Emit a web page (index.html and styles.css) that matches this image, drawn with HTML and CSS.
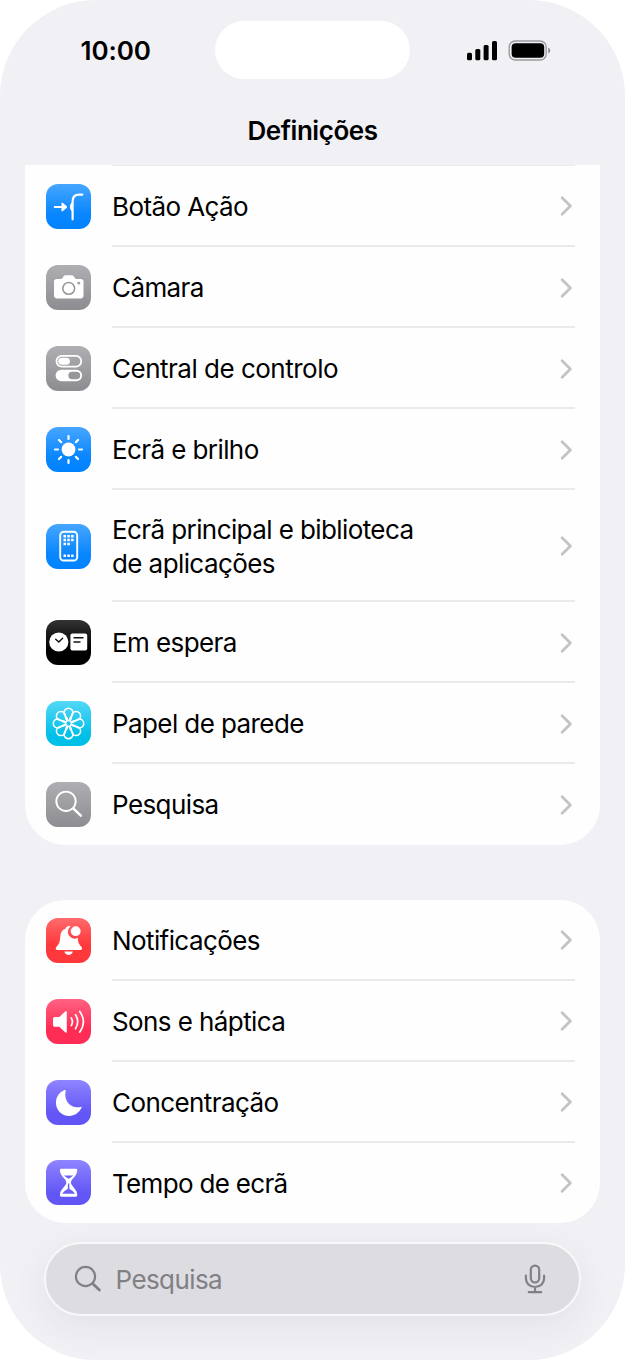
FILE: index.html
```
<!DOCTYPE html>
<html lang="pt">
<head>
<meta charset="utf-8">
<title>Definições</title>
<link rel="stylesheet" href="styles.css">
</head>
<body>
<svg class="defs" width="0" height="0" aria-hidden="true">
  <symbol id="chevron" viewBox="0 0 14 22"><path d="M2.100 2.800 10.400 11 2.100 19.200" fill="none" stroke="#c4c4c6" stroke-width="2.800" stroke-linecap="round" stroke-linejoin="round"/></symbol>
</svg>
<main class="phone">
  <header class="status">
    <time class="clock">10:00</time>
    <div class="island"></div>
    <svg class="indicators" viewBox="0 0 86 24">
      <rect x="1" y="14.7" width="5" height="7.6" rx="1.5"/><rect x="9.3" y="11" width="5" height="11.3" rx="1.5"/><rect x="17.6" y="7" width="5" height="15.3" rx="1.5"/><rect x="26" y="3" width="5" height="19.3" rx="1.5"/>
      <rect x="43.2" y="3" width="37" height="19" rx="6" fill="none" stroke="#9b9a9e" stroke-width="1.4"/>
      <rect x="45.6" y="5.3" width="32.6" height="14.4" rx="4"/>
      <path d="M82.300 9.500q1.900 1 1.900 3t-1.900 3z" fill="#858488"/>
    </svg>
  </header>
  <h1 class="title">Definições</h1>
  <section class="card card-first">
    <a class="row"><span class="icon blue"><svg viewBox="0 0 45 45"><g fill="none" stroke="#fff" stroke-width="2.2" stroke-linecap="round"><path d="M8.8 23H17M26.6 35.3V17.5Q26.6 10.6 33 10.6H36.3"/></g><path d="M15.5 19.2q0-1.3 1.1-.5l4.2 3.5q.8.8 0 1.6l-4.2 3.5q-1.1.8-1.1-.5zM26.8 18.3v9.2c-3.7-.6-3.7-8.6 0-9.2z" fill="#fff"/></svg></span><span class="label nudge">Botão Ação</span><svg class="chev"><use href="#chevron"/></svg></a>
    <a class="row"><span class="icon gray"><svg viewBox="0 0 45 45"><path d="M10.8 14H15q1 0 1.6-1l.9-1.5q.7-1.2 2.2-1.2h6q1.5 0 2.2 1.2l.9 1.5q.6 1 1.6 1h4.3q2.8 0 2.8 2.8v13.8q0 2.8-2.8 2.8H10.8Q8 33.400 8 30.600V16.800Q8 14 10.800 14z" fill="#fff"/><g fill="none" stroke="#98979c" stroke-width="1.6"><circle cx="22.7" cy="23.400" r="5.900"/></g><circle cx="32.800" cy="18.200" r="1.400" fill="#a09fa4"/></svg></span><span class="label">Câmara</span><svg class="chev"><use href="#chevron"/></svg></a>
    <a class="row"><span class="icon gray"><svg viewBox="0 0 45 45"><rect x="10.500" y="9.900" width="24.700" height="10.700" rx="5.350" fill="none" stroke="#fff" stroke-width="1.800"/><rect x="12.300" y="11.700" width="11.600" height="7.100" rx="3.550" fill="#fff"/><rect x="9.600" y="23.700" width="26.500" height="11.500" rx="5.750" fill="#fff"/><rect x="22.400" y="25.700" width="11.800" height="7.500" rx="3.750" fill="#96959a"/></svg></span><span class="label wide">Central de controlo</span><svg class="chev"><use href="#chevron"/></svg></a>
    <a class="row"><span class="icon blue"><svg viewBox="0 0 45 45"><circle cx="22.500" cy="22.500" r="6.900" fill="#fff"/><g stroke="#fff" stroke-width="2.200" stroke-linecap="round"><path d="M22.500 9v3M22.500 33v3M9 22.500h3M33 22.500h3M13 13l2.200 2.200M29.800 29.800l2.200 2.200M32 13l-2.200 2.200M15.200 29.800 13 32"/></g></svg></span><span class="label">Ecrã e brilho</span><svg class="chev"><use href="#chevron"/></svg></a>
    <a class="row tall"><span class="icon blue"><svg viewBox="0 0 45 45"><rect x="14.200" y="7.800" width="17" height="28.700" rx="3.500" fill="none" stroke="#fff" stroke-width="1.900"/><path stroke="#fff" stroke-width="2.500" stroke-dasharray="2.500 1.300" d="M17.500 12.300h10.100M17.500 16.100h10.100M17.500 19.900h6.300M17.500 31.700h10.100"/></svg></span><span class="label nudge">Ecrã principal e biblioteca<br>de aplicações</span><svg class="chev"><use href="#chevron"/></svg></a>
    <a class="row"><span class="icon black"><svg viewBox="0 0 45 45"><circle cx="12.800" cy="22" r="9.600" fill="#fff"/><rect x="24.400" y="13.600" width="16.800" height="16.900" rx="2" fill="#fff"/><path d="m9.700 19.300 3.100 2.800 3.800-3.900M28 17.700h9M28 22h6" fill="none" stroke="#111" stroke-width="1.400" stroke-linecap="round"/></svg></span><span class="label">Em espera</span><svg class="chev"><use href="#chevron"/></svg></a>
    <a class="row"><span class="icon cyan"><svg viewBox="-22.500 -22.500 45 45"><defs><path id="petal" d="M-1-3.400C-1.200-5.200-2-6.300-3-7.400a4.500 4.500 0 1 1 6 0C2-6.300 1.200-5.200 1-3.400"/></defs><g fill="none" stroke="#fff" stroke-width="1.500"><use href="#petal"/><use href="#petal" transform="rotate(45)"/><use href="#petal" transform="rotate(90)"/><use href="#petal" transform="rotate(135)"/><use href="#petal" transform="rotate(180)"/><use href="#petal" transform="rotate(225)"/><use href="#petal" transform="rotate(270)"/><use href="#petal" transform="rotate(315)"/><circle r="2.900"/></g></svg></span><span class="label">Papel de parede</span><svg class="chev"><use href="#chevron"/></svg></a>
    <a class="row"><span class="icon gray"><svg viewBox="0 0 45 45"><circle cx="20" cy="19.300" r="9.700" fill="none" stroke="#fff" stroke-width="1.900"/><path d="m27.500 26.700 7.300 7" stroke="#fff" stroke-width="2.500" stroke-linecap="round"/></svg></span><span class="label">Pesquisa</span><svg class="chev"><use href="#chevron"/></svg></a>
  </section>
  <section class="card card-second">
    <a class="row"><span class="icon red"><svg viewBox="0 0 45 45"><path d="M24.500 8.600a6.700 6.700 0 0 0 7.300 11.200c.2 5.500 1.700 6.800 3.500 8.900 1.500 1.900.8 3.300-1 3.300H11.500c-1.800 0-2.500-1.400-1-3.300 2-2.300 3.400-3.500 3.700-9.700.2-4.300 2-7.300 5.300-8.200.8-2.500 3.400-3.300 5-2.200zM18.400 33.500h8.400c-.7 4.500-7.700 4.500-8.400 0z" fill="#fff"/><circle cx="29.700" cy="13.200" r="4.900" fill="#fff"/></svg></span><span class="label nudge">Notificações</span><svg class="chev"><use href="#chevron"/></svg></a>
    <a class="row"><span class="icon pink"><svg viewBox="0 0 45 45"><path d="M8.700 18h4.500l5.700-5.300q1.900-1.600 1.900.7v19q0 2.300-1.900.7l-5.700-5.300H8.700Q7 27.800 7 26.100v-6.400Q7 18 8.700 18z" fill="#fff"/><path d="M25.300 19q2.200 3.800 0 7.600M29.500 15.800q4.400 7 0 14M33.800 12.500q7.200 10.300 0 20.600" fill="none" stroke="#fff" stroke-width="1.700" stroke-linecap="round"/></svg></span><span class="label nudge">Sons e háptica</span><svg class="chev"><use href="#chevron"/></svg></a>
    <a class="row"><span class="icon purple"><svg viewBox="0 0 45 45"><path d="M18.600 10.100q1.500-.6 1.100.8C17.300 20.700 25 29 34.400 26.900q1.800-.4 1.100.9C33 33 28.500 35.900 23.200 35.900 15.800 35.900 10 30.200 10 22.900 10 17 13.300 12.200 18.600 10.100z" fill="#fff"/></svg></span><span class="label nudge">Concentração</span><svg class="chev"><use href="#chevron"/></svg></a>
    <a class="row"><span class="icon purple"><svg viewBox="0 0 45 45"><path d="M15.200 8.700h14.800q1.300 0 1.300 1.400c0 6.500-6.300 8.400-6.300 12.500s6.300 6.200 6.300 12.700q0 1.400-1.300 1.400H15.200q-1.300 0-1.300-1.400c0-6.500 6.400-8.600 6.400-12.700S13.900 16.600 13.900 10.100q0-1.400 1.300-1.400z" fill="#fff"/><path d="M18 15.500h9.200q-1.300 1.500-4.600 3.200-3.300-1.700-4.600-3.200zM22 23.500h1.200l.3 5.500q4.600 2.700 5.400 4.800H16.300q.8-2.100 5.400-4.800z" fill="#6c61f5"/></svg></span><span class="label tight nudge">Tempo de ecrã</span><svg class="chev"><use href="#chevron"/></svg></a>
  </section>
  <div class="search">
    <svg class="glass" viewBox="0 0 28 28"><circle cx="11.500" cy="11.500" r="9.600"/><path d="m18.800 18.700 6.600 6.400" stroke-width="2.800"/></svg>
    <span class="label nudge">Pesquisa</span>
    <svg class="mic" viewBox="0 0 22 30"><rect x="6.800" y="1.600" width="8.400" height="16.800" rx="4.200"/><path d="M1.900 11.700v2.600c0 5 3.500 8.700 9.100 8.700s9.100-3.700 9.100-8.700v-2.600M11 23v5M4.800 28.200h12.400"/></svg>
  </div>
</main>
</body>
</html>
```
FILE: styles.css
```
* { box-sizing: border-box; }
body { margin: 0; background: #fff; font-family: Inter, sans-serif; color: #000; }
.defs { display: block; }
.phone { width: 625px; height: 1360px; display: flex; flex-direction: column; background: #f1f0f5; border-radius: 96px; overflow: hidden; }
.status { display: grid; grid-template-columns: 215px 195px 215px; height: 79px; padding-top: 21px; flex: none; }
.clock { padding-left: 80.500px; font-size: 26px; font-weight: 600; line-height: 60px; letter-spacing: -.1px; }
.island { height: 58px; border-radius: 29px; background: #fff; }
.indicators { width: 86px; height: 24px; margin: 17px 0 0 56px; }
.title { margin: 34px 0 0; height: 52px; flex: none; text-align: center; font-size: 26px; font-weight: 600; line-height: 36px; letter-spacing: -.45px; }
.card { flex: none; width: 575px; margin: 0 25px; padding-left: 21px; background: #fefefe; border-radius: 40px; }
.card-first { border-radius: 0 0 40px 40px; }
.card-second { margin-top: 54.500px; }
.row { display: flex; align-items: center; height: 81px; padding-right: 26px; position: relative; }
.tall { height: 112px; }
.card-first .row:first-child { height: 82px; }
.card-second .row:last-child { height: 80.500px; }
.row:not(:last-child)::after, .card-first .row:first-child::before { content: ""; position: absolute; left: 66px; right: 25px; bottom: 0; height: 2px; background: #eaeaec; }
.card-first .row:first-child::before { bottom: auto; top: 0; height: 1px; }
.icon { flex: none; width: 45px; height: 45px; border-radius: 12px; margin-right: 21px; }
.icon svg { display: block; width: 45px; height: 45px; }
.blue { background: linear-gradient(#47a6ff, #0a87ff 65%, #0082ff); }
.gray { background: linear-gradient(#afaeb2, #8d8c91); }
.black { background: linear-gradient(#333, #000 65%); }
.cyan { background: linear-gradient(#55d7f6, #00c0e8 75%); }
.red { background: linear-gradient(#ff6b6c, #ff383c 60%); }
.pink { background: linear-gradient(#ff6283, #ff2d55 65%); }
.purple { background: linear-gradient(#8f84ff, #6155f5 75%); }
.label { flex: 1; font-size: 26px; line-height: 34px; letter-spacing: -.59px; white-space: nowrap; }
.wide { letter-spacing: -.5px; }
.tight { letter-spacing: -.68px; }
.nudge { padding-top: 2px; }
.chev { flex: none; width: 14px; height: 22px; }
.search { flex: none; display: flex; align-items: center; width: 537px; height: 74px; margin: 19px 44px 0; padding: 0 33px 0 27.500px; border: 2px solid #f8f8fa; border-radius: 37px; background: #dddce1; box-shadow: 0 10px 36px rgba(40,36,60,.07); color: #818085; }
.glass, .mic { fill: none; stroke: #818085; stroke-width: 2.200; stroke-linecap: round; }
.glass { width: 28px; height: 28px; margin: 0 14px 0 0; }
.mic { width: 22px; height: 30px; }
```
